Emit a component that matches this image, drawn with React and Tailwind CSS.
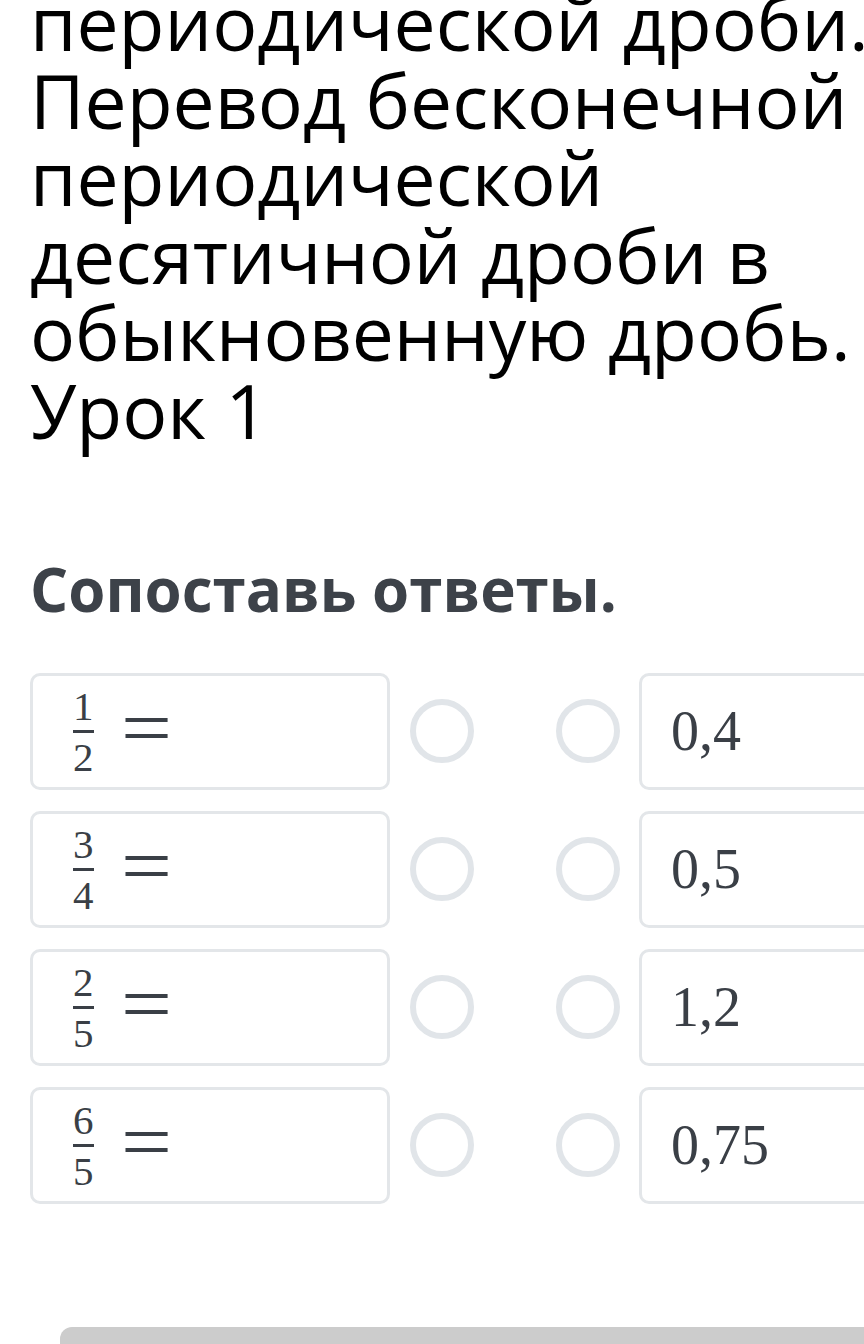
import React from "react";

const leftItems = [
  ["1", "2"],
  ["3", "4"],
  ["2", "5"],
  ["6", "5"],
];
const rightItems = ["0,4", "0,5", "1,2", "0,75"];

function Fraction({ n, d }) {
  return (
    <span className="inline-flex flex-col items-stretch px-[5px]">
      <span className="block text-center text-[41px] leading-[30px] h-[30px]">{n}</span>
      <span className="block h-[3px] bg-[#3a3f46] mt-[9px]" />
      <span className="block text-center text-[41px] leading-[30px] h-[30px] mt-[9px]">{d}</span>
    </span>
  );
}

function Ring() {
  return <div className="w-16 h-16 shrink-0 rounded-full border-[6px] border-[#e1e5e9]" />;
}

export default function App() {
  return (
    <div className="w-full h-[1344px] overflow-hidden bg-white">
      <h1
        className="mt-[-16px] pl-[30px] text-[75px] leading-[77.6px] text-black font-normal whitespace-nowrap"
        style={{ fontFamily: '"Open Sans", "Noto Sans", sans-serif' }}
      >
        периодической дроби.
        <br />
        Перевод бесконечной
        <br />
        периодической
        <br />
        десятичной дроби в
        <br />
        обыкновенную дробь.
        <br />
        Урок 1
      </h1>

      <h2
        className="mt-[102px] pl-[30px] text-[60px] leading-[74px] font-bold text-[#3d4249] whitespace-nowrap"
        style={{ fontFamily: '"Open Sans", "Noto Sans", sans-serif' }}
      >
        Сопоставь ответы.
      </h2>

      <div
        className="mt-[47px] flex flex-col gap-[21px] text-[#3a3f46]"
        style={{ fontFamily: '"Liberation Serif", "Times New Roman", serif' }}
      >
        {leftItems.map(([n, d], i) => (
          <div key={i} className="flex items-center pl-[30px]">
            <div className="w-[360px] h-[117px] shrink-0 rounded-[10px] border-[3px] border-[#e3e6e9] flex items-center pl-[35px]">
              <Fraction n={n} d={d} />
              <span className="ml-[22px] text-[80px] leading-none relative top-[-3px] inline-block origin-left scale-x-[1.13]">
                =
              </span>
            </div>
            <div className="ml-[20px]">
              <Ring />
            </div>
            <div className="ml-[82px]">
              <Ring />
            </div>
            <div className="ml-[19px] w-[360px] h-[117px] shrink-0 rounded-[10px] border-[3px] border-[#e3e6e9] flex items-center pl-[29px]">
              <span className="text-[56px] leading-none">{rightItems[i]}</span>
            </div>
          </div>
        ))}
      </div>

      <div className="mt-[123px] ml-[60px] h-[60px] bg-[#cccccc] rounded-tl-[12px]" />
    </div>
  );
}
